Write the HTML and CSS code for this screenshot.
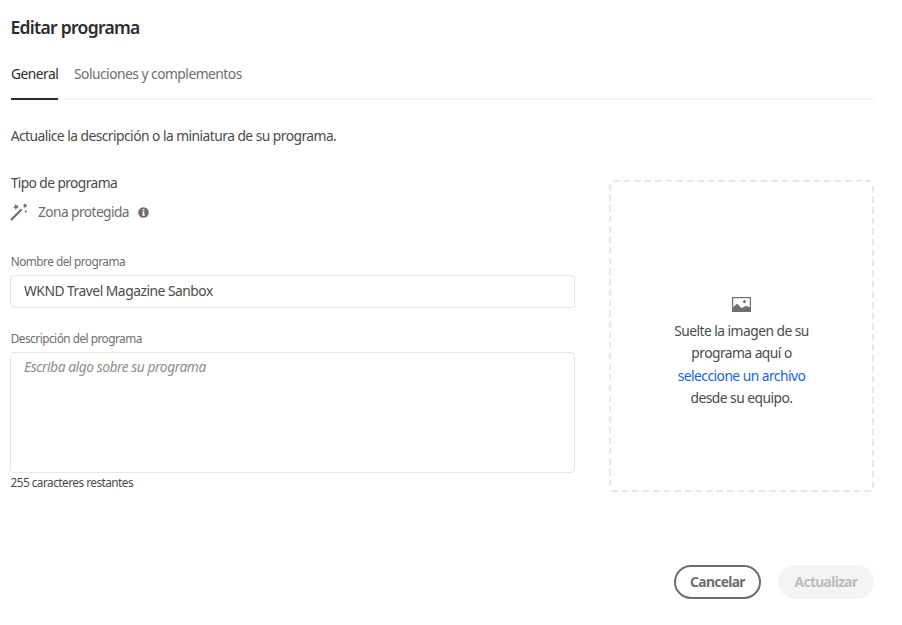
FILE: index.html
```html
<!DOCTYPE html>
<html lang="es">
<head>
<meta charset="utf-8">
<title>Editar programa</title>
<link rel="stylesheet" href="styles.css">
</head>
<body>
<main class="dialog">
  <h1 class="title">Editar programa</h1>
  <nav class="tabs">
    <a class="tab active">General</a>
    <a class="tab">Soluciones y complementos</a>
  </nav>
  <p class="intro">Actualice la descripción o la miniatura de su programa.</p>
  <div class="content">
    <section class="form">
      <div class="type-label">Tipo de programa</div>
      <div class="type">
        <svg class="wand" viewBox="0 0 18 18" width="18" height="18">
          <path d="M1.5 16.500L11 7" stroke="#6e6e6e" stroke-width="2.200" stroke-linecap="round"/>
          <path fill="#6e6e6e" d="M5.300.900l1.100 1.600 1.900-.500-.8 1.700 1.300 1.500-2-.1L5.600 7l-.5-2-2-.7 1.700-1zM14.600 0l.7 1.500 1.700-.400-.8 1.500 1 1.400-1.600-.1-1.100 1.400-.4-1.700-1.500-.6 1.400-.9z"/>
          <circle cx="15.800" cy="8.500" r="1.100" fill="#6e6e6e"/>
        </svg>
        <span class="type-name">Zona protegida</span>
        <svg class="info" viewBox="0 0 11 11" width="11" height="11">
          <circle cx="5.500" cy="5.500" r="5.300" fill="#6e6e6e"/>
          <path fill="#fff" d="M4.700 2h1.700v1.500H4.700zM4.200 4.500h2.100v3.300h.7v1H4.100v-1h.7V5.500h-.6z"/>
        </svg>
      </div>
      <label class="label name-label">Nombre del programa</label>
      <div class="field name">WKND Travel Magazine Sanbox</div>
      <label class="label desc-label">Descripción del programa</label>
      <div class="field desc">Escriba algo sobre su programa</div>
      <div class="remaining">255 caracteres restantes</div>
    </section>
    <section class="drop">
      <svg class="drop-border" width="265" height="312">
        <path d="M4 1H262M264 6V308M1 4V308M2 311H262" fill="none" stroke="#e8e8e8" stroke-width="2" stroke-dasharray="6.600 3.950"/>
      </svg>
      <svg class="picture" viewBox="0 0 19 15" width="19" height="15">
        <rect x=".6" y=".6" width="17.800" height="13.800" fill="#fff" stroke="#6e6e6e" stroke-width="1.200"/>
        <path fill="#6e6e6e" d="M1 10.500c1.500-.8 2.500-3.500 4-3.500s3 3.800 4.800 3.800c1.700 0 2.700-1.800 4.400-1.800 1.600 0 2.700 1.300 3.800 1.300V14H1z"/>
        <circle cx="12.500" cy="4.500" r="1.500" fill="#6e6e6e"/>
      </svg>
      <p class="drop-text">Suelte la imagen de su<br>programa aquí o<br><a>seleccione un archivo</a><br>desde su equipo.</p>
    </section>
  </div>
  <footer class="actions">
    <button class="btn cancel">Cancelar</button>
    <button class="btn update" disabled>Actualizar</button>
  </footer>
</main>
</body>
</html>
```
FILE: styles.css
```css
* { box-sizing: border-box; }
body { margin: 0; background: #fff; color: #4b4b4b; font: 13.8px/22px "Noto Sans", "Open Sans", sans-serif; letter-spacing: -0.53px; }
h1, p { margin: 0; }
svg { display: block; flex: none; }
.dialog { width: 902px; height: 625px; padding: 16px 28px 0 10px; white-space: nowrap; }
.title { padding-left: 0.5px; font-size: 17.5px; line-height: 22px; font-weight: 600; color: #2c2c2c; letter-spacing: -0.7px; }
.tabs { display: flex; gap: 16px; height: 44px; margin-top: 18px; margin-left: 1px; border-bottom: 2px solid #f4f4f4; }
.tab { height: 44px; padding-top: 7px; line-height: 22px; color: #6e6e6e; letter-spacing: -0.51px; }
.tab.active { width: 47px; color: #2c2c2c; border-bottom: 2px solid #2c2c2c; }
.intro { margin-top: 25px; padding-left: 0.7px; }
.content { display: flex; justify-content: space-between; margin-top: 33px; }
.form { width: 565px; }
.type-label { margin-top: -8px; padding-left: 0.7px; letter-spacing: -0.6px; }
.type { display: flex; align-items: center; height: 22px; margin-top: 7px; color: #6e6e6e; letter-spacing: -0.6px; }
.type-name { width: 91px; margin-left: 10px; }
.info { margin-left: 9px; }
.label { display: block; padding-left: 0.7px; font-size: 11.8px; line-height: 16px; color: #6e6e6e; letter-spacing: -0.5px; }
.name-label { margin-top: 30px; }
.field { border: 1px solid #e6e6e6; border-radius: 4px; padding: 0 13px; letter-spacing: -0.48px; }
.name { height: 33px; margin-top: 6px; line-height: 30px; }
.desc-label { margin-top: 22px; }
.desc { height: 121px; margin-top: 6px; padding-top: 3px; font-style: italic; color: #8e8e8e; letter-spacing: -0.45px; }
.remaining { margin-top: 1px; padding-left: 0.5px; font-size: 11.8px; line-height: 16px; letter-spacing: -0.52px; }
.drop { position: relative; width: 265px; height: 312px; padding-top: 117px; text-align: center; }
.drop-border { position: absolute; inset: 0; }
.picture { margin: 0 auto; }
.drop-text { margin-top: 8px; line-height: 22.25px; }
.drop-text a { color: #1463e6; }
.actions { display: flex; justify-content: flex-end; gap: 17px; margin-top: 73px; }
.btn { height: 34px; padding: 0; border: 0; border-radius: 17px; font: 700 13.8px/30px "Noto Sans", sans-serif; letter-spacing: -0.65px; }
.cancel { width: 87px; border: 2px solid #6e6e6e; background: #fff; color: #6e6e6e; }
.update { width: 96px; background: #f4f4f4; color: #bcbcbc; }
```
